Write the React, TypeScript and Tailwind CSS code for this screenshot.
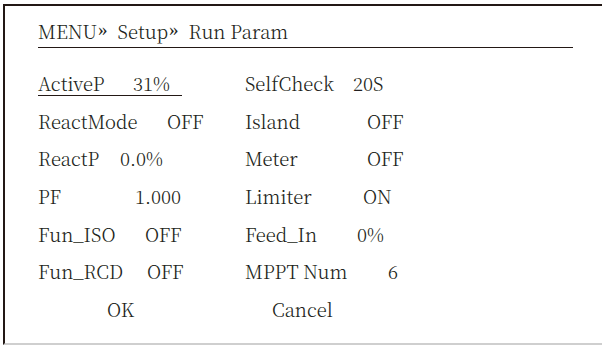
import React from 'react';

type Row = {
  left: string;
  leftVal: string;
  leftW: string;
  right: string;
  rightVal: string;
  rightW: string;
};

const rows: Row[] = [
  { left: 'ActiveP', leftVal: '31%', leftW: 'w-[95px]', right: 'SelfCheck', rightVal: '20S', rightW: 'w-[108px]' },
  { left: 'ReactMode', leftVal: 'OFF', leftW: 'w-[129px]', right: 'Island', rightVal: 'OFF', rightW: 'w-[122px]' },
  { left: 'ReactP', leftVal: '0.0%', leftW: 'w-[82px]', right: 'Meter', rightVal: 'OFF', rightW: 'w-[122px]' },
  { left: 'PF', leftVal: '1.000', leftW: 'w-[97px]', right: 'Limiter', rightVal: 'ON', rightW: 'w-[118px]' },
  { left: 'Fun_ISO', leftVal: 'OFF', leftW: 'w-[107px]', right: 'Feed_In', rightVal: '0%', rightW: 'w-[112px]' },
  { left: 'Fun_RCD', leftVal: 'OFF', leftW: 'w-[109px]', right: 'MPPT Num', rightVal: '6', rightW: 'w-[143px]' },
];

const Sep: React.FC = () => (
  <span className="inline-block font-['Liberation_Serif',serif] text-[19px] align-[3px] ml-[1px] mr-[10px]">»</span>
);

const App: React.FC = () => {
  return (
    <div className="w-[602px] h-[345px] bg-white overflow-hidden pt-[4px] pl-[3px]">
      <div className="h-[341px] border-l-2 border-t-2 border-b-2 border-l-[#231815] border-t-[#231815] border-b-[#cfcfcf] pl-[33px] font-['Noto_Serif_CJK_SC','Liberation_Serif',serif] font-light text-[18.5px] leading-[24px] text-[#231f20]">
        <div className="w-[535px] h-[42px] pt-[12px] border-b-[1.5px] border-[#231815]">
          MENU<Sep />Setup<Sep />Run Param
        </div>

        <div className="mt-[16px]">
          {rows.map((row, i) => (
            <div key={row.left} className="grid grid-cols-[207px_1fr] h-[37.7px] items-center">
              <div className="flex">
                {i === 0 ? (
                  <div className="flex w-[144px] border-b-[1.5px] border-[#231815] translate-y-[1px]">
                    <span className={row.leftW}>{row.left}</span>
                    <span>{row.leftVal}</span>
                  </div>
                ) : (
                  <>
                    <span className={row.leftW}>{row.left}</span>
                    <span>{row.leftVal}</span>
                  </>
                )}
              </div>
              <div className="flex">
                <span className={row.rightW}>{row.right}</span>
                <span>{row.rightVal}</span>
              </div>
            </div>
          ))}
          <div className="grid grid-cols-[234px_1fr] h-[37.7px] items-center">
            <span className="pl-[69px]">OK</span>
            <span>Cancel</span>
          </div>
        </div>
      </div>
    </div>
  );
};

export default App;
